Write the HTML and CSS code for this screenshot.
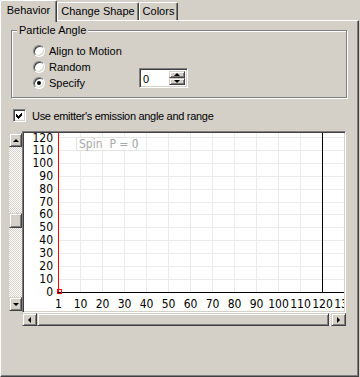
FILE: index.html
```html
<!DOCTYPE html>
<html lang="en">
<head>
  <meta charset="UTF-8">
  <title>Particle Behavior</title>
  <link rel="stylesheet" href="styles.css">
</head>
<body>
  <!-- Tabs -->
  <div class="tabs">
    <div class="tab tab-behavior active">Behavior</div>
    <div class="tab tab-shape">Change Shape</div>
    <div class="tab tab-colors">Colors</div>
  </div>

  <div class="panel">
    <!-- Particle angle group -->
    <div class="group">
      <span class="group-title">Particle Angle</span>
      <div class="radios">
        <div class="radio-row"><span class="radio"></span>Align to Motion</div>
        <div class="radio-row"><span class="radio"></span>Random</div>
        <div class="radio-row"><span class="radio checked"></span>Specify</div>
      </div>
      <div class="spin">
        <span class="spin-value">0</span>
        <div class="spin-buttons">
          <span class="btn spin-btn"><i class="arrow up"></i></span>
          <span class="btn spin-btn"><i class="arrow down"></i></span>
        </div>
      </div>
    </div>

    <div class="check-row">
      <span class="checkbox">
        <svg width="9" height="9" viewBox="0 0 9 9"><polygon points="1,3 3,5 7,1 7,4 3,8 1,6" fill="#000" shape-rendering="crispEdges"/></svg>
      </span>
      <span class="check-label">Use emitter's emission angle and range</span>
    </div>

    <!-- Chart -->
    <div class="chart-area">
      <div class="vscroll">
        <span class="btn vbtn"><i class="arrow up"></i></span>
        <div class="vtrack"><span class="btn vthumb"></span></div>
        <span class="btn vbtn"><i class="arrow down"></i></span>
      </div>
      <div class="chart">
        <svg class="plot" width="320" height="178" viewBox="0 0 320 178">
          <g stroke="#ebebeb" stroke-width="1">
            <line x1="56.5" y1="0" x2="56.5" y2="159"/>
            <line x1="78.5" y1="0" x2="78.5" y2="159"/>
            <line x1="100.5" y1="0" x2="100.5" y2="159"/>
            <line x1="122.5" y1="0" x2="122.5" y2="159"/>
            <line x1="144.5" y1="0" x2="144.5" y2="159"/>
            <line x1="166.5" y1="0" x2="166.5" y2="159"/>
            <line x1="188.5" y1="0" x2="188.5" y2="159"/>
            <line x1="210.5" y1="0" x2="210.5" y2="159"/>
            <line x1="232.5" y1="0" x2="232.5" y2="159"/>
            <line x1="254.5" y1="0" x2="254.5" y2="159"/>
            <line x1="276.5" y1="0" x2="276.5" y2="159"/>
            <line x1="34" y1="4.5" x2="320" y2="4.5"/>
            <line x1="34" y1="17.5" x2="320" y2="17.5"/>
            <line x1="34" y1="30.5" x2="320" y2="30.5"/>
            <line x1="34" y1="43.5" x2="320" y2="43.5"/>
            <line x1="34" y1="56.5" x2="320" y2="56.5"/>
            <line x1="34" y1="69.5" x2="320" y2="69.5"/>
            <line x1="34" y1="81.5" x2="320" y2="81.5"/>
            <line x1="34" y1="94.5" x2="320" y2="94.5"/>
            <line x1="34" y1="107.5" x2="320" y2="107.5"/>
            <line x1="34" y1="120.5" x2="320" y2="120.5"/>
            <line x1="34" y1="133.5" x2="320" y2="133.5"/>
            <line x1="34" y1="146.5" x2="320" y2="146.5"/>
          </g>
          <rect x="52.5" y="4.5" width="60" height="13" fill="#fff" stroke="#e4e4e4"/>
          <text class="note" x="55" y="15">Spin  P = 0</text>
          <line x1="298.5" y1="0" x2="298.5" y2="159" stroke="#000"/>
          <line x1="34" y1="159.5" x2="320" y2="159.5" stroke="#000"/>
          <line x1="34.5" y1="0" x2="34.5" y2="159" stroke="#f00"/>
          <rect x="33.5" y="156.5" width="4" height="4" fill="none" stroke="#f00"/>
          <g class="ylabels" text-anchor="end">
            <text x="29" y="163">0</text>
            <text x="29" y="150">10</text>
            <text x="29" y="137">20</text>
            <text x="29" y="124">30</text>
            <text x="29" y="111">40</text>
            <text x="29" y="98">50</text>
            <text x="29" y="85">60</text>
            <text x="29" y="73">70</text>
            <text x="29" y="60">80</text>
            <text x="29" y="47">90</text>
            <text x="29" y="34">100</text>
            <text x="29" y="21">110</text>
            <text x="29" y="9">120</text>
          </g>
          <g class="xlabels" text-anchor="middle">
            <text x="34.5" y="175">1</text>
            <text x="56.5" y="175">10</text>
            <text x="78.5" y="175">20</text>
            <text x="100.5" y="175">30</text>
            <text x="122.5" y="175">40</text>
            <text x="144.5" y="175">50</text>
            <text x="166.5" y="175">60</text>
            <text x="188.5" y="175">70</text>
            <text x="210.5" y="175">80</text>
            <text x="232.5" y="175">90</text>
            <text x="254.5" y="175">100</text>
            <text x="276.5" y="175">110</text>
            <text x="298.5" y="175">120</text>
            <text x="320.5" y="175">130</text>
          </g>
        </svg>
      </div>
      <div class="hscroll">
        <span class="btn hbtn"><i class="arrow left"></i></span>
        <span class="btn hthumb"></span>
        <span class="htrack"></span>
        <span class="btn hbtn"><i class="arrow right"></i></span>
      </div>
    </div>
  </div>
</body>
</html>
```

FILE: styles.css
```css
:root {
  --face: #d4d0c8;
  --shadow: #808080;
  --dark: #404040;
  --light: #fff;
  --dither: repeating-conic-gradient(#fff 0 25%, #d4d0c8 0 50%) 0 0 / 2px 2px;
}
* {
  box-sizing: border-box;
  margin: 0;
  padding: 0;
}
body {
  width: 360px;
  height: 377px;
  overflow: hidden;
  background: var(--face);
  color: #000;
  font-family: "Liberation Sans", Arial, sans-serif;
  font-size: 11px;
}
/* Tabs */
.tabs {
  display: flex;
  align-items: flex-start;
  height: 20px;
}
.tab {
  height: 18px;
  margin-top: 2px;
  line-height: 17px;
  text-align: center;
  background: var(--face);
  border-top: 1px solid var(--light);
  border-left: 1px solid var(--light);
  border-right: 1px solid var(--dark);
  border-radius: 2px 2px 0 0;
  box-shadow: inset -1px 0 var(--shadow);
}
.tab.active {
  position: relative;
  z-index: 1;
  height: 22px;
  margin-top: 0;
  line-height: 18px;
}
.tab-behavior { width: 57px; }
.tab-shape { width: 82px; }
.tab-colors { width: 39px; }
/* Panel */
.panel {
  width: 359px;
  height: 357px;
  padding-top: 9px;
  border-top: 1px solid var(--light);
  border-left: 1px solid var(--light);
  border-right: 1px solid var(--dark);
  border-bottom: 1px solid var(--dark);
  box-shadow: inset -1px -1px var(--shadow);
}
/* Raised / sunken bits */
.btn {
  display: flex;
  align-items: center;
  justify-content: center;
  background: var(--face);
  border: 1px solid;
  border-color: var(--face) var(--dark) var(--dark) var(--face);
  box-shadow: inset 1px 1px var(--light), inset -1px -1px var(--shadow);
}
.arrow {
  display: block;
  width: 0;
  height: 0;
  border: 3px solid transparent;
}
.arrow.up { border-top-width: 0; border-bottom-color: #000; }
.arrow.down { border-bottom-width: 0; border-top-color: #000; }
.arrow.left { border-left-width: 0; border-right-color: #000; }
.arrow.right { border-right-width: 0; border-left-color: #000; }
/* Group box */
.group {
  position: relative;
  display: flex;
  width: 336px;
  height: 68px;
  margin-left: 10px;
  padding: 12px 0 0 21px;
  border: 1px solid var(--shadow);
  box-shadow: 1px 1px var(--light), inset 1px 1px var(--light);
}
.group-title {
  position: absolute;
  top: -7px;
  left: 5px;
  padding: 0 2px;
  line-height: 13px;
  background: var(--face);
}
.radios {
  width: 106px;
}
.radio-row {
  display: flex;
  align-items: center;
  gap: 4px;
  height: 16px;
}
.radio {
  position: relative;
  width: 12px;
  height: 12px;
  border-radius: 50%;
  background: #fff;
  border: 1px solid;
  border-color: var(--shadow) var(--light) var(--light) var(--shadow);
  box-shadow: inset 1px 1px var(--dark), inset -1px -1px var(--face);
}
.radio.checked::after {
  content: "";
  position: absolute;
  top: 3px;
  left: 3px;
  width: 4px;
  height: 4px;
  border-radius: 50%;
  background: #000;
}
.spin {
  display: flex;
  width: 49px;
  height: 20px;
  margin-top: 25px;
  padding: 2px;
  background: #fff;
  border: 1px solid;
  border-color: var(--shadow) var(--light) var(--light) var(--shadow);
  box-shadow: inset 1px 1px var(--dark), inset -1px -1px var(--face);
}
.spin-value {
  flex: 1;
  padding-left: 1px;
  line-height: 16px;
}
.spin-buttons {
  display: flex;
  flex-direction: column;
  width: 16px;
}
.spin-btn {
  flex: 1;
}
/* Checkbox */
.check-row {
  display: flex;
  align-items: center;
  gap: 6px;
  height: 13px;
  margin: 11px 0 0 12px;
}
.check-label {
  letter-spacing: -0.3px;
}
.checkbox {
  display: flex;
  align-items: center;
  justify-content: center;
  width: 13px;
  height: 13px;
  background: #fff;
  border: 1px solid;
  border-color: var(--shadow) var(--light) var(--light) var(--shadow);
  box-shadow: inset 1px 1px var(--dark), inset -1px -1px var(--face);
}
.checkbox svg { display: block; }
/* Chart */
.chart-area {
  display: grid;
  grid-template-columns: 13px 324px;
  grid-template-rows: 182px 13px;
  margin: 9px 0 0 8px;
}
.vscroll {
  display: flex;
  flex-direction: column;
  margin: 2px 0;
}
.vbtn {
  height: 14px;
}
.vtrack {
  flex: 1;
  background: var(--dither);
}
.vthumb {
  height: 15px;
  margin-top: 66px;
}
.chart {
  background: #fff;
  border: 1px solid;
  border-color: var(--shadow) var(--light) var(--light) var(--shadow);
  box-shadow: inset 1px 1px var(--dark), inset -1px -1px var(--face);
  padding: 1px;
}
.plot {
  display: block;
  shape-rendering: crispEdges;
  font-family: "Liberation Sans Narrow", "Arial Narrow", "DejaVu Sans Condensed", "Liberation Sans", sans-serif;
  font-stretch: condensed;
  font-size: 12px;
}
.plot text {
  fill: #000;
}
.plot .note {
  fill: #a8a8a8;
  white-space: pre;
}
.hscroll {
  grid-column: 2;
  display: flex;
}
.hbtn {
  width: 15px;
}
.hthumb {
  flex: 1;
}
.htrack {
  width: 2px;
  background: var(--dither);
}
```
